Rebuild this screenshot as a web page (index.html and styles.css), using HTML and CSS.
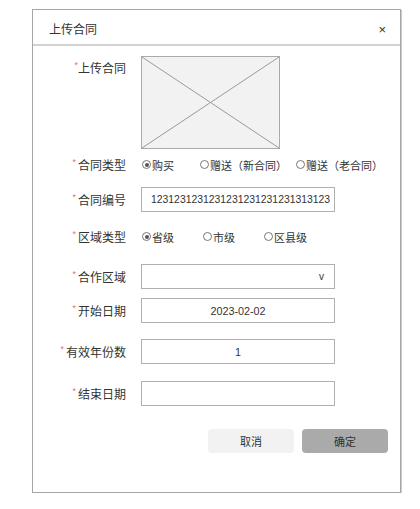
FILE: index.html
```html
<!DOCTYPE html>
<html lang="zh-CN">
<head>
<meta charset="utf-8">
<title>上传合同</title>
<link rel="stylesheet" href="styles.css">
</head>
<body>
<div class="dialog">
  <div class="dialog-header">
    <span class="dialog-title">上传合同</span>
    <span class="dialog-close">×</span>
  </div>
  <div class="form">
    <div class="row row-upload">
      <div class="label label-top"><span class="req">*</span>上传合同</div>
      <div class="placeholder">
        <svg width="139" height="93" viewBox="0 0 139 93">
          <rect x="0.5" y="0.5" width="138" height="92" fill="#f2f2f2" stroke="#aaaaaa"/>
          <line x1="1" y1="1" x2="138" y2="92" stroke="#9a9a9a" stroke-width="1"/>
          <line x1="138" y1="1" x2="1" y2="92" stroke="#9a9a9a" stroke-width="1"/>
        </svg>
      </div>
    </div>
    <div class="row row-type">
      <div class="label"><span class="req">*</span>合同类型</div>
      <div class="radios">
        <span class="radio on w1"><i class="dot"></i>购买</span>
        <span class="radio w2"><i class="dot"></i>赠送（新合同）</span>
        <span class="radio"><i class="dot"></i>赠送（老合同）</span>
      </div>
    </div>
    <div class="row row-no">
      <div class="label"><span class="req">*</span>合同编号</div>
      <div class="input">1231231231231231231231231313123</div>
    </div>
    <div class="row row-area-type">
      <div class="label"><span class="req">*</span>区域类型</div>
      <div class="radios">
        <span class="radio on w3"><i class="dot"></i>省级</span>
        <span class="radio w3"><i class="dot"></i>市级</span>
        <span class="radio"><i class="dot"></i>区县级</span>
      </div>
    </div>
    <div class="row row-area">
      <div class="label"><span class="req">*</span>合作区域</div>
      <div class="input select"><span class="arrow">v</span></div>
    </div>
    <div class="row row-start">
      <div class="label"><span class="req">*</span>开始日期</div>
      <div class="input center">2023-02-02</div>
    </div>
    <div class="row row-years">
      <div class="label"><span class="req">*</span>有效年份数</div>
      <div class="input center">1</div>
    </div>
    <div class="row row-end">
      <div class="label"><span class="req">*</span>结束日期</div>
      <div class="input"></div>
    </div>
    <div class="actions">
      <button class="btn btn-cancel">取消</button>
      <button class="btn btn-ok">确定</button>
    </div>
  </div>
</div>
</body>
</html>
```

FILE: styles.css
```css
html, body {
  margin: 0;
  padding: 0;
  background: #ffffff;
}
body {
  font-family: "Noto Sans CJK SC", "Liberation Sans", sans-serif;
  color: #333333;
  font-size: 12px;
}
.dialog {
  margin: 9px 0 0 32px;
  width: 367px;
  height: 482px;
  border: 1px solid #a6a6a6;
  box-shadow: 1px 1px 0 #cccccc;
  background: #ffffff;
  box-sizing: content-box;
}
.dialog-header {
  height: 34px;
  border-bottom: 2px solid #d2d2d2;
  display: flex;
  align-items: center;
  justify-content: space-between;
  padding: 0 14px 0 16px;
  box-sizing: border-box;
  height: 36px;
}
.dialog-title {
  font-size: 12px;
  line-height: 16px;
  padding-top: 4px;
}
.dialog-close {
  font-family: "Liberation Sans", sans-serif;
  font-size: 13px;
  padding-top: 4px;
  color: #333;
}
.form {
  padding-top: 10px;
  display: flex;
  flex-direction: column;
}
.row {
  display: flex;
  align-items: center;
  height: 25px;
}
.label {
  width: 93px;
  text-align: right;
  padding-right: 15px;
  flex: none;
  font-size: 12px;
  line-height: 16px;
  white-space: nowrap;
}
.req {
  color: #f26b6b;
  font-family: "Liberation Sans", sans-serif;
  font-size: 9px;
  vertical-align: top;
  line-height: 10px;
  margin-right: 2px;
}
.row-upload {
  height: 93px;
  align-items: flex-start;
}
.label-top {
  padding-top: 4px;
}
.label-top .req {
  margin-right: 0;
}
.placeholder {
  height: 93px;
}
.placeholder svg {
  display: block;
}
.row-type { margin-top: 3px; }
.row-no { margin-top: 10px; }
.row-area-type { margin-top: 12px; }
.row-area { margin-top: 15px; }
.row-start { margin-top: 9px; }
.row-years { margin-top: 16px; }
.row-end { margin-top: 17px; }
.radios {
  display: flex;
  align-items: center;
  font-size: 11px;
  margin-left: 1px;
}
.radio {
  display: inline-flex;
  align-items: center;
  white-space: nowrap;
}
.radio.w1 { width: 58px; }
.radio.w2 { width: 96px; }
.radio.w3 { width: 61px; }
.dot {
  width: 9px;
  height: 9px;
  border: 1px solid #777777;
  border-radius: 50%;
  box-sizing: border-box;
  margin-right: 1px;
  position: relative;
  display: inline-block;
}
.radio.on .dot::after {
  content: "";
  position: absolute;
  left: 1.5px;
  top: 1.5px;
  width: 4px;
  height: 4px;
  border-radius: 50%;
  background: #555555;
}
.input {
  width: 194px;
  height: 25px;
  border: 1px solid #b0b0b0;
  box-sizing: border-box;
  display: flex;
  align-items: center;
  padding-left: 9px;
  font-family: "Liberation Sans", sans-serif;
  font-size: 10.4px;
  color: #333333;
  background: #ffffff;
}
.input.center {
  justify-content: center;
  padding-left: 0;
  font-size: 10.8px;
}
.select {
  justify-content: flex-end;
  padding-right: 10px;
}
.arrow {
  font-size: 10px;
  color: #333;
}
.actions {
  display: flex;
  justify-content: flex-end;
  gap: 8px;
  padding-right: 12px;
  margin-top: 23px;
}
.btn {
  width: 86px;
  height: 24px;
  border: none;
  border-radius: 4px;
  font-family: "Noto Sans CJK SC", "Liberation Sans", sans-serif;
  font-size: 11px;
  color: #333333;
  padding: 0;
}
.btn-cancel {
  background: #f2f2f2;
}
.btn-ok {
  background: #aaaaaa;
}
```
